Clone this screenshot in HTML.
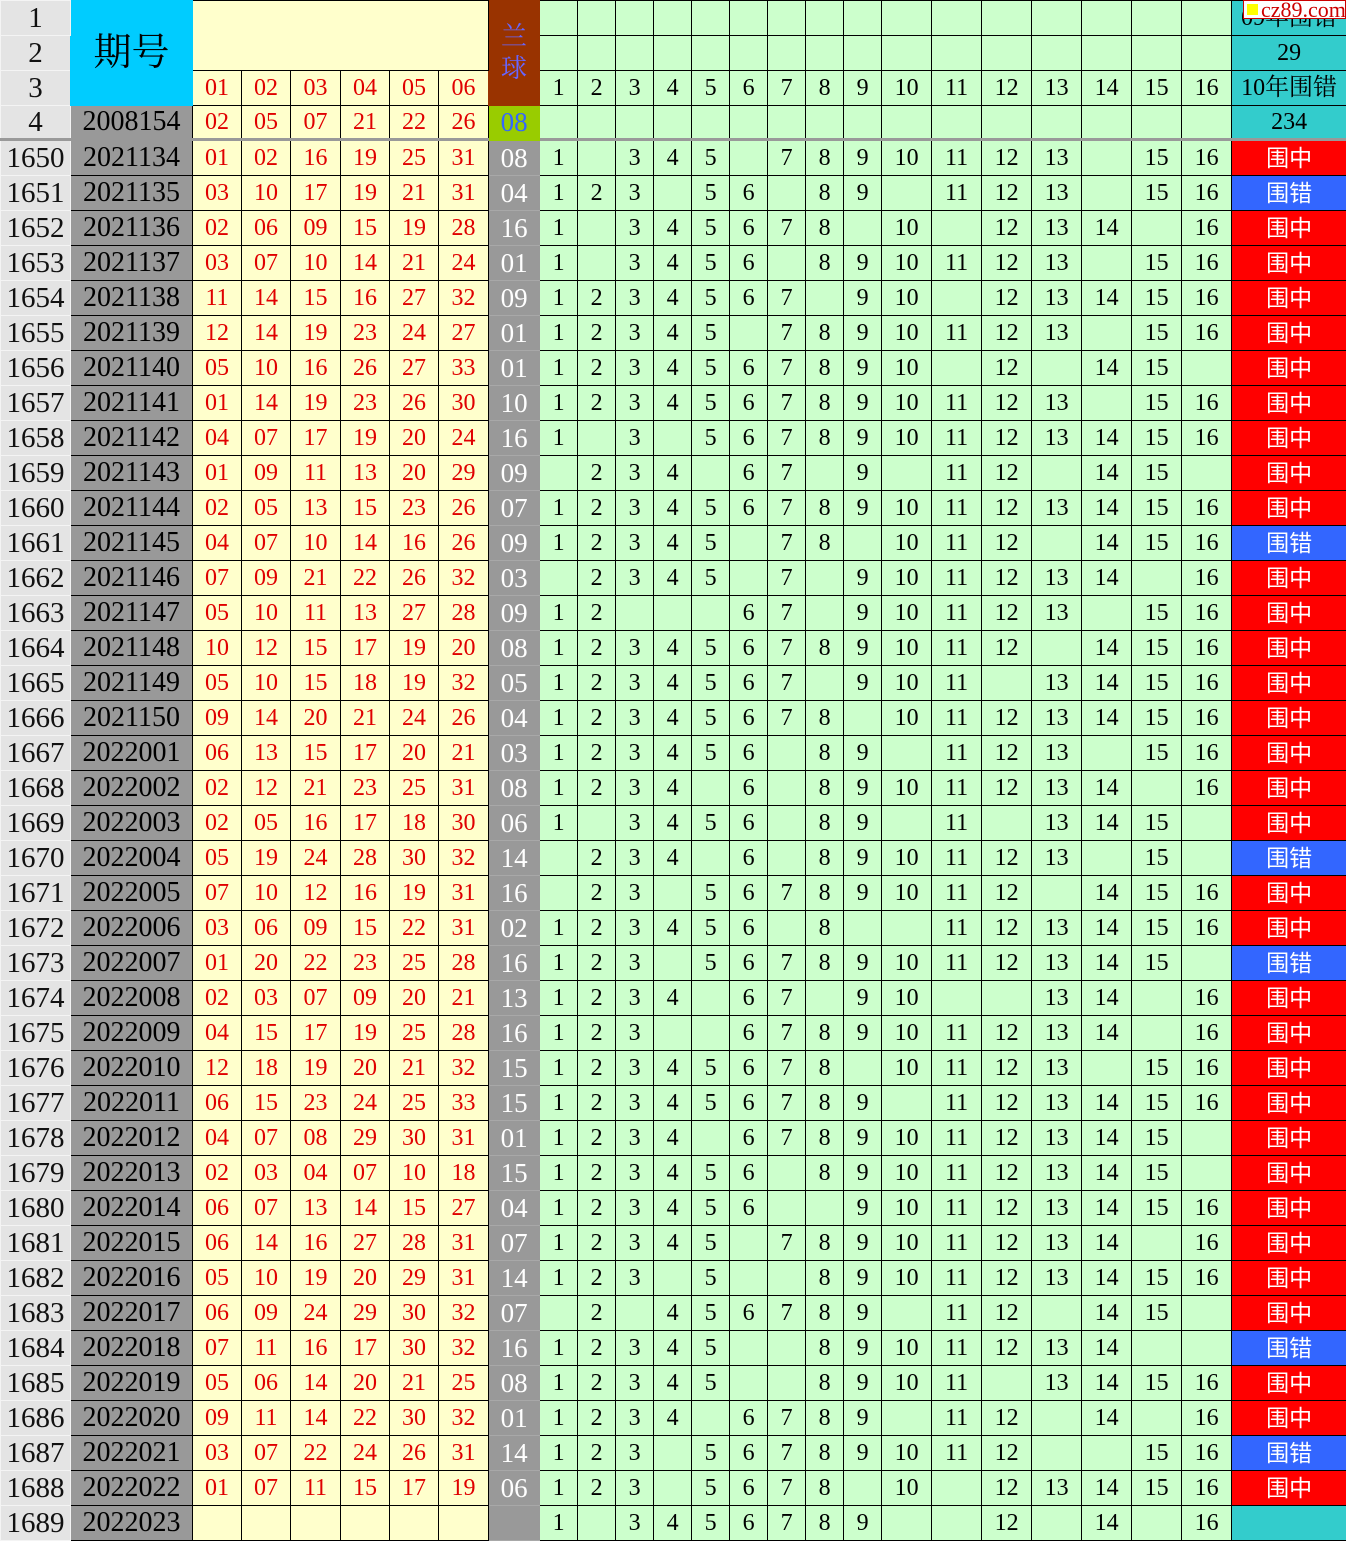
<!DOCTYPE html>
<html><head><meta charset="utf-8">
<style>
html,body{margin:0;padding:0;background:#fff;width:1346px;height:1538px;overflow:hidden}
table{border-collapse:collapse;table-layout:fixed;width:1346px;font-family:"Liberation Serif","Noto Serif CJK SC",serif;position:absolute;left:0;top:0}
td,th{height:34px;padding:0;text-align:center;border:1px solid #000;font-size:24px;font-weight:normal;line-height:34px;overflow:hidden;white-space:nowrap;background:#ccffcc;color:#000}
th{background:#e4e4e4;border:1px solid #f4f4f4;font-size:29px;color:#111}
td.p{background:#999;font-size:28px;border-left:none}
td.r{background:#ffffcc;color:#e00000}
td.b{background:#999;color:#fff;font-size:27px;border-color:#999;border-bottom-color:#a8a8a8}
td.z,td.c{font-family:"Liberation Sans","Noto Sans CJK SC",sans-serif;color:#fff;font-size:23px}
td.z{background:#ff0000}
td.c{background:#3366ff}
td.t{background:#33cccc;font-size:24px}
td.q{background:#00ccff;font-size:38px;border-color:#00ccff;font-family:"Liberation Serif","Noto Serif CJK SC",serif}
td.l{background:#993300;color:#6666ff;font-size:26px;line-height:32px;white-space:normal;border-color:#993300}
tr.h4 td,tr.h4 th{border-bottom:3px solid #999;height:32px;line-height:32px}
.wm{position:absolute;left:1243px;top:0;width:103px;height:19px;background:#fff;border:1px solid #c00;font:22px/17px "Liberation Serif",serif;color:#c00;box-sizing:border-box;padding-left:17px;white-space:nowrap}
.wm:before{content:"";position:absolute;left:3px;top:3px;width:11px;height:11px;background:#ff0}
</style></head><body>
<table>
<colgroup><col style="width:70px"><col style="width:122px"><col style="width:49px"><col style="width:49px"><col style="width:50px"><col style="width:49px"><col style="width:49px"><col style="width:50px"><col style="width:51px"><col style="width:38px"><col style="width:38px"><col style="width:38px"><col style="width:38px"><col style="width:38px"><col style="width:38px"><col style="width:38px"><col style="width:38px"><col style="width:38px"><col style="width:50px"><col style="width:50px"><col style="width:50px"><col style="width:50px"><col style="width:50px"><col style="width:50px"><col style="width:50px"><col style="width:115px"></colgroup>
<tr><th>1</th><td class="q" rowspan="3">期号</td><td class="r" colspan="6" rowspan="2"></td><td class="l" rowspan="3">兰<br>球</td><td></td><td></td><td></td><td></td><td></td><td></td><td></td><td></td><td></td><td></td><td></td><td></td><td></td><td></td><td></td><td></td><td class="t">09年围错</td></tr>
<tr><th>2</th><td></td><td></td><td></td><td></td><td></td><td></td><td></td><td></td><td></td><td></td><td></td><td></td><td></td><td></td><td></td><td></td><td class="t">29</td></tr>
<tr><th>3</th><td class="r">01</td><td class="r">02</td><td class="r">03</td><td class="r">04</td><td class="r">05</td><td class="r">06</td><td>1</td><td>2</td><td>3</td><td>4</td><td>5</td><td>6</td><td>7</td><td>8</td><td>9</td><td>10</td><td>11</td><td>12</td><td>13</td><td>14</td><td>15</td><td>16</td><td class="t">10年围错</td></tr>
<tr class="h4"><th>4</th><td class="p">2008154</td><td class="r">02</td><td class="r">05</td><td class="r">07</td><td class="r">21</td><td class="r">22</td><td class="r">26</td><td style="background:#99cc00;color:#3366ff;font-size:27px;border-color:#99cc00">08</td><td></td><td></td><td></td><td></td><td></td><td></td><td></td><td></td><td></td><td></td><td></td><td></td><td></td><td></td><td></td><td></td><td class="t">234</td></tr>
<tr><th>1650</th><td class="p">2021134</td><td class="r">01</td><td class="r">02</td><td class="r">16</td><td class="r">19</td><td class="r">25</td><td class="r">31</td><td class="b">08</td><td>1</td><td></td><td>3</td><td>4</td><td>5</td><td></td><td>7</td><td>8</td><td>9</td><td>10</td><td>11</td><td>12</td><td>13</td><td></td><td>15</td><td>16</td><td class="z">围中</td></tr>
<tr><th>1651</th><td class="p">2021135</td><td class="r">03</td><td class="r">10</td><td class="r">17</td><td class="r">19</td><td class="r">21</td><td class="r">31</td><td class="b">04</td><td>1</td><td>2</td><td>3</td><td></td><td>5</td><td>6</td><td></td><td>8</td><td>9</td><td></td><td>11</td><td>12</td><td>13</td><td></td><td>15</td><td>16</td><td class="c">围错</td></tr>
<tr><th>1652</th><td class="p">2021136</td><td class="r">02</td><td class="r">06</td><td class="r">09</td><td class="r">15</td><td class="r">19</td><td class="r">28</td><td class="b">16</td><td>1</td><td></td><td>3</td><td>4</td><td>5</td><td>6</td><td>7</td><td>8</td><td></td><td>10</td><td></td><td>12</td><td>13</td><td>14</td><td></td><td>16</td><td class="z">围中</td></tr>
<tr><th>1653</th><td class="p">2021137</td><td class="r">03</td><td class="r">07</td><td class="r">10</td><td class="r">14</td><td class="r">21</td><td class="r">24</td><td class="b">01</td><td>1</td><td></td><td>3</td><td>4</td><td>5</td><td>6</td><td></td><td>8</td><td>9</td><td>10</td><td>11</td><td>12</td><td>13</td><td></td><td>15</td><td>16</td><td class="z">围中</td></tr>
<tr><th>1654</th><td class="p">2021138</td><td class="r">11</td><td class="r">14</td><td class="r">15</td><td class="r">16</td><td class="r">27</td><td class="r">32</td><td class="b">09</td><td>1</td><td>2</td><td>3</td><td>4</td><td>5</td><td>6</td><td>7</td><td></td><td>9</td><td>10</td><td></td><td>12</td><td>13</td><td>14</td><td>15</td><td>16</td><td class="z">围中</td></tr>
<tr><th>1655</th><td class="p">2021139</td><td class="r">12</td><td class="r">14</td><td class="r">19</td><td class="r">23</td><td class="r">24</td><td class="r">27</td><td class="b">01</td><td>1</td><td>2</td><td>3</td><td>4</td><td>5</td><td></td><td>7</td><td>8</td><td>9</td><td>10</td><td>11</td><td>12</td><td>13</td><td></td><td>15</td><td>16</td><td class="z">围中</td></tr>
<tr><th>1656</th><td class="p">2021140</td><td class="r">05</td><td class="r">10</td><td class="r">16</td><td class="r">26</td><td class="r">27</td><td class="r">33</td><td class="b">01</td><td>1</td><td>2</td><td>3</td><td>4</td><td>5</td><td>6</td><td>7</td><td>8</td><td>9</td><td>10</td><td></td><td>12</td><td></td><td>14</td><td>15</td><td></td><td class="z">围中</td></tr>
<tr><th>1657</th><td class="p">2021141</td><td class="r">01</td><td class="r">14</td><td class="r">19</td><td class="r">23</td><td class="r">26</td><td class="r">30</td><td class="b">10</td><td>1</td><td>2</td><td>3</td><td>4</td><td>5</td><td>6</td><td>7</td><td>8</td><td>9</td><td>10</td><td>11</td><td>12</td><td>13</td><td></td><td>15</td><td>16</td><td class="z">围中</td></tr>
<tr><th>1658</th><td class="p">2021142</td><td class="r">04</td><td class="r">07</td><td class="r">17</td><td class="r">19</td><td class="r">20</td><td class="r">24</td><td class="b">16</td><td>1</td><td></td><td>3</td><td></td><td>5</td><td>6</td><td>7</td><td>8</td><td>9</td><td>10</td><td>11</td><td>12</td><td>13</td><td>14</td><td>15</td><td>16</td><td class="z">围中</td></tr>
<tr><th>1659</th><td class="p">2021143</td><td class="r">01</td><td class="r">09</td><td class="r">11</td><td class="r">13</td><td class="r">20</td><td class="r">29</td><td class="b">09</td><td></td><td>2</td><td>3</td><td>4</td><td></td><td>6</td><td>7</td><td></td><td>9</td><td></td><td>11</td><td>12</td><td></td><td>14</td><td>15</td><td></td><td class="z">围中</td></tr>
<tr><th>1660</th><td class="p">2021144</td><td class="r">02</td><td class="r">05</td><td class="r">13</td><td class="r">15</td><td class="r">23</td><td class="r">26</td><td class="b">07</td><td>1</td><td>2</td><td>3</td><td>4</td><td>5</td><td>6</td><td>7</td><td>8</td><td>9</td><td>10</td><td>11</td><td>12</td><td>13</td><td>14</td><td>15</td><td>16</td><td class="z">围中</td></tr>
<tr><th>1661</th><td class="p">2021145</td><td class="r">04</td><td class="r">07</td><td class="r">10</td><td class="r">14</td><td class="r">16</td><td class="r">26</td><td class="b">09</td><td>1</td><td>2</td><td>3</td><td>4</td><td>5</td><td></td><td>7</td><td>8</td><td></td><td>10</td><td>11</td><td>12</td><td></td><td>14</td><td>15</td><td>16</td><td class="c">围错</td></tr>
<tr><th>1662</th><td class="p">2021146</td><td class="r">07</td><td class="r">09</td><td class="r">21</td><td class="r">22</td><td class="r">26</td><td class="r">32</td><td class="b">03</td><td></td><td>2</td><td>3</td><td>4</td><td>5</td><td></td><td>7</td><td></td><td>9</td><td>10</td><td>11</td><td>12</td><td>13</td><td>14</td><td></td><td>16</td><td class="z">围中</td></tr>
<tr><th>1663</th><td class="p">2021147</td><td class="r">05</td><td class="r">10</td><td class="r">11</td><td class="r">13</td><td class="r">27</td><td class="r">28</td><td class="b">09</td><td>1</td><td>2</td><td></td><td></td><td></td><td>6</td><td>7</td><td></td><td>9</td><td>10</td><td>11</td><td>12</td><td>13</td><td></td><td>15</td><td>16</td><td class="z">围中</td></tr>
<tr><th>1664</th><td class="p">2021148</td><td class="r">10</td><td class="r">12</td><td class="r">15</td><td class="r">17</td><td class="r">19</td><td class="r">20</td><td class="b">08</td><td>1</td><td>2</td><td>3</td><td>4</td><td>5</td><td>6</td><td>7</td><td>8</td><td>9</td><td>10</td><td>11</td><td>12</td><td></td><td>14</td><td>15</td><td>16</td><td class="z">围中</td></tr>
<tr><th>1665</th><td class="p">2021149</td><td class="r">05</td><td class="r">10</td><td class="r">15</td><td class="r">18</td><td class="r">19</td><td class="r">32</td><td class="b">05</td><td>1</td><td>2</td><td>3</td><td>4</td><td>5</td><td>6</td><td>7</td><td></td><td>9</td><td>10</td><td>11</td><td></td><td>13</td><td>14</td><td>15</td><td>16</td><td class="z">围中</td></tr>
<tr><th>1666</th><td class="p">2021150</td><td class="r">09</td><td class="r">14</td><td class="r">20</td><td class="r">21</td><td class="r">24</td><td class="r">26</td><td class="b">04</td><td>1</td><td>2</td><td>3</td><td>4</td><td>5</td><td>6</td><td>7</td><td>8</td><td></td><td>10</td><td>11</td><td>12</td><td>13</td><td>14</td><td>15</td><td>16</td><td class="z">围中</td></tr>
<tr><th>1667</th><td class="p">2022001</td><td class="r">06</td><td class="r">13</td><td class="r">15</td><td class="r">17</td><td class="r">20</td><td class="r">21</td><td class="b">03</td><td>1</td><td>2</td><td>3</td><td>4</td><td>5</td><td>6</td><td></td><td>8</td><td>9</td><td></td><td>11</td><td>12</td><td>13</td><td></td><td>15</td><td>16</td><td class="z">围中</td></tr>
<tr><th>1668</th><td class="p">2022002</td><td class="r">02</td><td class="r">12</td><td class="r">21</td><td class="r">23</td><td class="r">25</td><td class="r">31</td><td class="b">08</td><td>1</td><td>2</td><td>3</td><td>4</td><td></td><td>6</td><td></td><td>8</td><td>9</td><td>10</td><td>11</td><td>12</td><td>13</td><td>14</td><td></td><td>16</td><td class="z">围中</td></tr>
<tr><th>1669</th><td class="p">2022003</td><td class="r">02</td><td class="r">05</td><td class="r">16</td><td class="r">17</td><td class="r">18</td><td class="r">30</td><td class="b">06</td><td>1</td><td></td><td>3</td><td>4</td><td>5</td><td>6</td><td></td><td>8</td><td>9</td><td></td><td>11</td><td></td><td>13</td><td>14</td><td>15</td><td></td><td class="z">围中</td></tr>
<tr><th>1670</th><td class="p">2022004</td><td class="r">05</td><td class="r">19</td><td class="r">24</td><td class="r">28</td><td class="r">30</td><td class="r">32</td><td class="b">14</td><td></td><td>2</td><td>3</td><td>4</td><td></td><td>6</td><td></td><td>8</td><td>9</td><td>10</td><td>11</td><td>12</td><td>13</td><td></td><td>15</td><td></td><td class="c">围错</td></tr>
<tr><th>1671</th><td class="p">2022005</td><td class="r">07</td><td class="r">10</td><td class="r">12</td><td class="r">16</td><td class="r">19</td><td class="r">31</td><td class="b">16</td><td></td><td>2</td><td>3</td><td></td><td>5</td><td>6</td><td>7</td><td>8</td><td>9</td><td>10</td><td>11</td><td>12</td><td></td><td>14</td><td>15</td><td>16</td><td class="z">围中</td></tr>
<tr><th>1672</th><td class="p">2022006</td><td class="r">03</td><td class="r">06</td><td class="r">09</td><td class="r">15</td><td class="r">22</td><td class="r">31</td><td class="b">02</td><td>1</td><td>2</td><td>3</td><td>4</td><td>5</td><td>6</td><td></td><td>8</td><td></td><td></td><td>11</td><td>12</td><td>13</td><td>14</td><td>15</td><td>16</td><td class="z">围中</td></tr>
<tr><th>1673</th><td class="p">2022007</td><td class="r">01</td><td class="r">20</td><td class="r">22</td><td class="r">23</td><td class="r">25</td><td class="r">28</td><td class="b">16</td><td>1</td><td>2</td><td>3</td><td></td><td>5</td><td>6</td><td>7</td><td>8</td><td>9</td><td>10</td><td>11</td><td>12</td><td>13</td><td>14</td><td>15</td><td></td><td class="c">围错</td></tr>
<tr><th>1674</th><td class="p">2022008</td><td class="r">02</td><td class="r">03</td><td class="r">07</td><td class="r">09</td><td class="r">20</td><td class="r">21</td><td class="b">13</td><td>1</td><td>2</td><td>3</td><td>4</td><td></td><td>6</td><td>7</td><td></td><td>9</td><td>10</td><td></td><td></td><td>13</td><td>14</td><td></td><td>16</td><td class="z">围中</td></tr>
<tr><th>1675</th><td class="p">2022009</td><td class="r">04</td><td class="r">15</td><td class="r">17</td><td class="r">19</td><td class="r">25</td><td class="r">28</td><td class="b">16</td><td>1</td><td>2</td><td>3</td><td></td><td></td><td>6</td><td>7</td><td>8</td><td>9</td><td>10</td><td>11</td><td>12</td><td>13</td><td>14</td><td></td><td>16</td><td class="z">围中</td></tr>
<tr><th>1676</th><td class="p">2022010</td><td class="r">12</td><td class="r">18</td><td class="r">19</td><td class="r">20</td><td class="r">21</td><td class="r">32</td><td class="b">15</td><td>1</td><td>2</td><td>3</td><td>4</td><td>5</td><td>6</td><td>7</td><td>8</td><td></td><td>10</td><td>11</td><td>12</td><td>13</td><td></td><td>15</td><td>16</td><td class="z">围中</td></tr>
<tr><th>1677</th><td class="p">2022011</td><td class="r">06</td><td class="r">15</td><td class="r">23</td><td class="r">24</td><td class="r">25</td><td class="r">33</td><td class="b">15</td><td>1</td><td>2</td><td>3</td><td>4</td><td>5</td><td>6</td><td>7</td><td>8</td><td>9</td><td></td><td>11</td><td>12</td><td>13</td><td>14</td><td>15</td><td>16</td><td class="z">围中</td></tr>
<tr><th>1678</th><td class="p">2022012</td><td class="r">04</td><td class="r">07</td><td class="r">08</td><td class="r">29</td><td class="r">30</td><td class="r">31</td><td class="b">01</td><td>1</td><td>2</td><td>3</td><td>4</td><td></td><td>6</td><td>7</td><td>8</td><td>9</td><td>10</td><td>11</td><td>12</td><td>13</td><td>14</td><td>15</td><td></td><td class="z">围中</td></tr>
<tr><th>1679</th><td class="p">2022013</td><td class="r">02</td><td class="r">03</td><td class="r">04</td><td class="r">07</td><td class="r">10</td><td class="r">18</td><td class="b">15</td><td>1</td><td>2</td><td>3</td><td>4</td><td>5</td><td>6</td><td></td><td>8</td><td>9</td><td>10</td><td>11</td><td>12</td><td>13</td><td>14</td><td>15</td><td></td><td class="z">围中</td></tr>
<tr><th>1680</th><td class="p">2022014</td><td class="r">06</td><td class="r">07</td><td class="r">13</td><td class="r">14</td><td class="r">15</td><td class="r">27</td><td class="b">04</td><td>1</td><td>2</td><td>3</td><td>4</td><td>5</td><td>6</td><td></td><td></td><td>9</td><td>10</td><td>11</td><td>12</td><td>13</td><td>14</td><td>15</td><td>16</td><td class="z">围中</td></tr>
<tr><th>1681</th><td class="p">2022015</td><td class="r">06</td><td class="r">14</td><td class="r">16</td><td class="r">27</td><td class="r">28</td><td class="r">31</td><td class="b">07</td><td>1</td><td>2</td><td>3</td><td>4</td><td>5</td><td></td><td>7</td><td>8</td><td>9</td><td>10</td><td>11</td><td>12</td><td>13</td><td>14</td><td></td><td>16</td><td class="z">围中</td></tr>
<tr><th>1682</th><td class="p">2022016</td><td class="r">05</td><td class="r">10</td><td class="r">19</td><td class="r">20</td><td class="r">29</td><td class="r">31</td><td class="b">14</td><td>1</td><td>2</td><td>3</td><td></td><td>5</td><td></td><td></td><td>8</td><td>9</td><td>10</td><td>11</td><td>12</td><td>13</td><td>14</td><td>15</td><td>16</td><td class="z">围中</td></tr>
<tr><th>1683</th><td class="p">2022017</td><td class="r">06</td><td class="r">09</td><td class="r">24</td><td class="r">29</td><td class="r">30</td><td class="r">32</td><td class="b">07</td><td></td><td>2</td><td></td><td>4</td><td>5</td><td>6</td><td>7</td><td>8</td><td>9</td><td></td><td>11</td><td>12</td><td></td><td>14</td><td>15</td><td></td><td class="z">围中</td></tr>
<tr><th>1684</th><td class="p">2022018</td><td class="r">07</td><td class="r">11</td><td class="r">16</td><td class="r">17</td><td class="r">30</td><td class="r">32</td><td class="b">16</td><td>1</td><td>2</td><td>3</td><td>4</td><td>5</td><td></td><td></td><td>8</td><td>9</td><td>10</td><td>11</td><td>12</td><td>13</td><td>14</td><td></td><td></td><td class="c">围错</td></tr>
<tr><th>1685</th><td class="p">2022019</td><td class="r">05</td><td class="r">06</td><td class="r">14</td><td class="r">20</td><td class="r">21</td><td class="r">25</td><td class="b">08</td><td>1</td><td>2</td><td>3</td><td>4</td><td>5</td><td></td><td></td><td>8</td><td>9</td><td>10</td><td>11</td><td></td><td>13</td><td>14</td><td>15</td><td>16</td><td class="z">围中</td></tr>
<tr><th>1686</th><td class="p">2022020</td><td class="r">09</td><td class="r">11</td><td class="r">14</td><td class="r">22</td><td class="r">30</td><td class="r">32</td><td class="b">01</td><td>1</td><td>2</td><td>3</td><td>4</td><td></td><td>6</td><td>7</td><td>8</td><td>9</td><td></td><td>11</td><td>12</td><td></td><td>14</td><td></td><td>16</td><td class="z">围中</td></tr>
<tr><th>1687</th><td class="p">2022021</td><td class="r">03</td><td class="r">07</td><td class="r">22</td><td class="r">24</td><td class="r">26</td><td class="r">31</td><td class="b">14</td><td>1</td><td>2</td><td>3</td><td></td><td>5</td><td>6</td><td>7</td><td>8</td><td>9</td><td>10</td><td>11</td><td>12</td><td></td><td></td><td>15</td><td>16</td><td class="c">围错</td></tr>
<tr><th>1688</th><td class="p">2022022</td><td class="r">01</td><td class="r">07</td><td class="r">11</td><td class="r">15</td><td class="r">17</td><td class="r">19</td><td class="b">06</td><td>1</td><td>2</td><td>3</td><td></td><td>5</td><td>6</td><td>7</td><td>8</td><td></td><td>10</td><td></td><td>12</td><td>13</td><td>14</td><td>15</td><td>16</td><td class="z">围中</td></tr>
<tr><th>1689</th><td class="p">2022023</td><td class="r"></td><td class="r"></td><td class="r"></td><td class="r"></td><td class="r"></td><td class="r"></td><td class="b"></td><td>1</td><td></td><td>3</td><td>4</td><td>5</td><td>6</td><td>7</td><td>8</td><td>9</td><td></td><td></td><td>12</td><td></td><td>14</td><td></td><td>16</td><td class="t"></td></tr>
</table>
<div class="wm">cz89.com</div>
</body></html>
